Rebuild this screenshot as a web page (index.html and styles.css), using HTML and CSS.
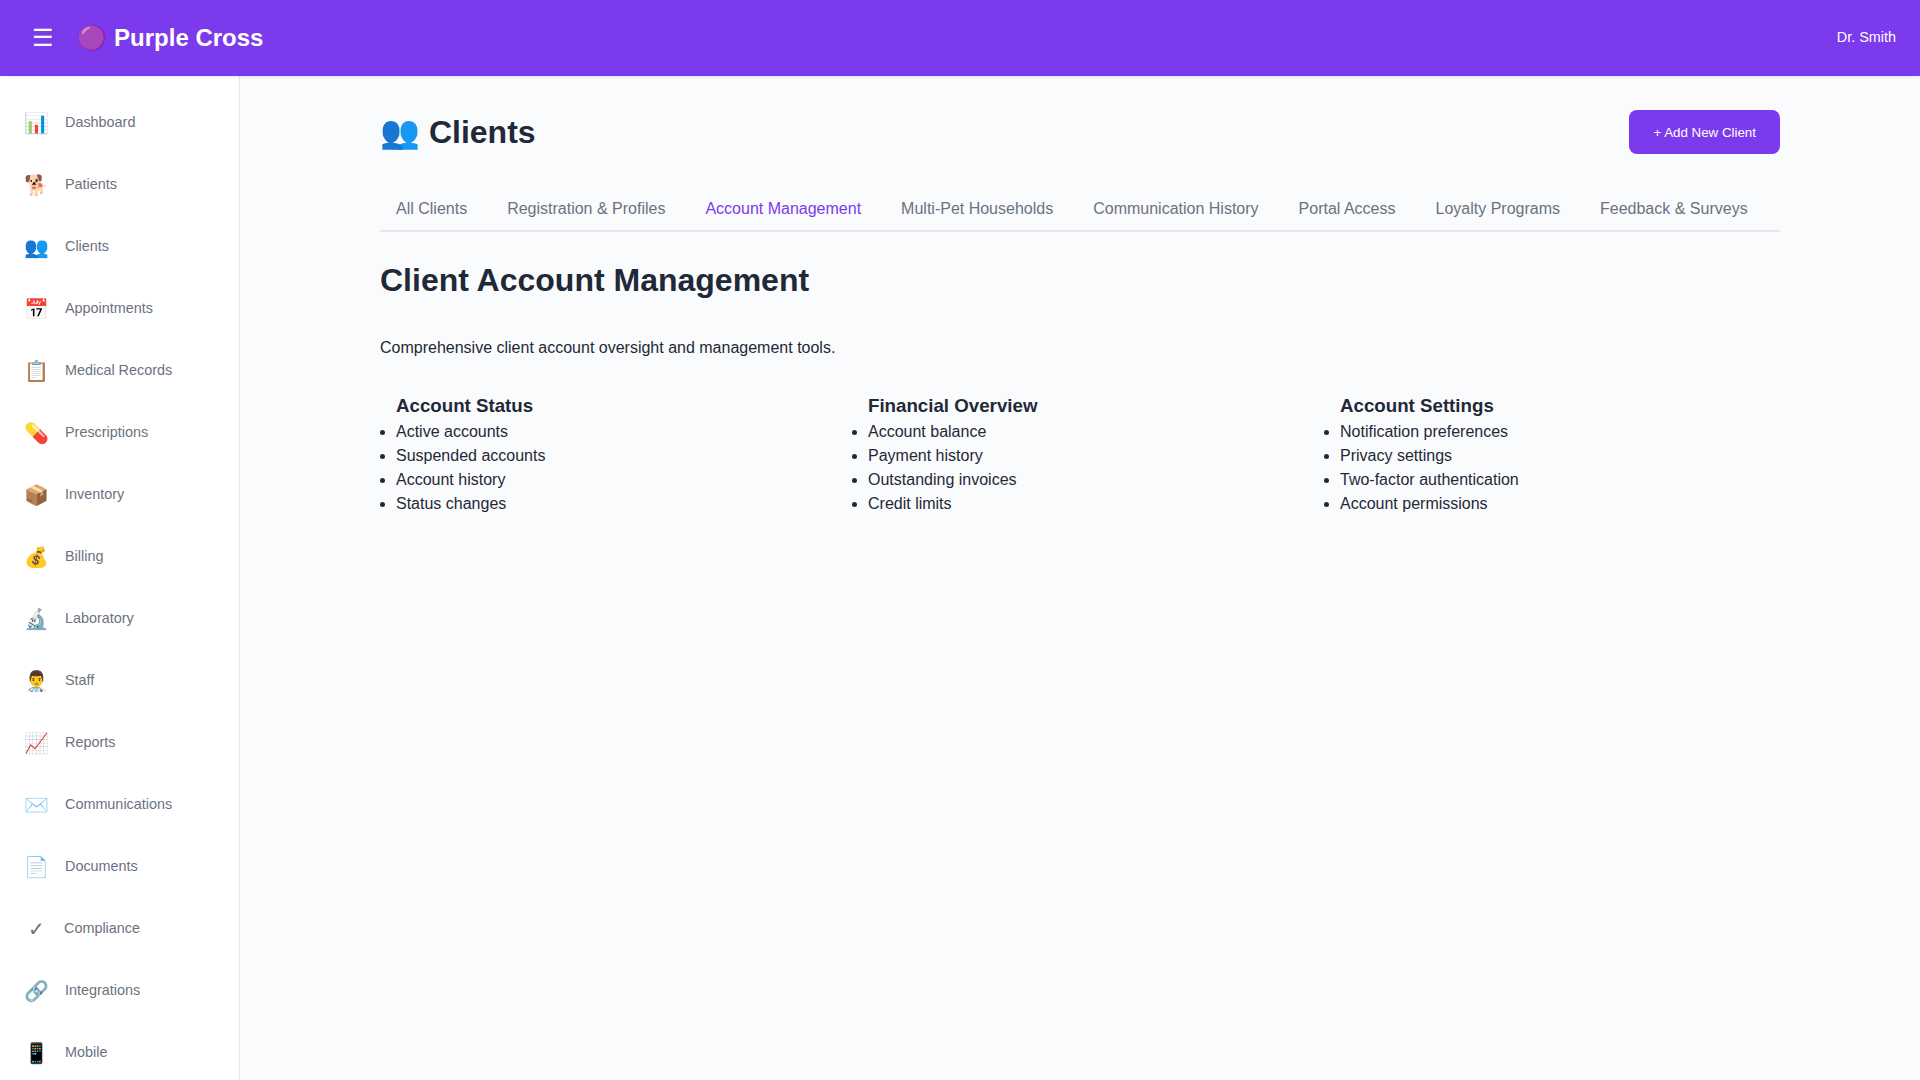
FILE: index.html
```html
<!DOCTYPE html>
<html lang="en">
<head>
	<meta charset="UTF-8">
	<title>Purple Cross</title>
	<link rel="stylesheet" href="styles.css">
</head>
<body>
<div class="app">
	<header class="topbar">
		<div class="topbar-left">
			<button class="menu-btn">☰</button>
			<div class="logo"><span>🟣</span> Purple Cross</div>
		</div>
		<div class="user">Dr. Smith</div>
	</header>
	<div class="layout">
		<!-- sidebar -->
		<nav class="sidebar">
			<a class="nav-item"><span class="nav-icon">📊</span><span>Dashboard</span></a>
			<a class="nav-item"><span class="nav-icon">🐕</span><span>Patients</span></a>
			<a class="nav-item"><span class="nav-icon">👥</span><span>Clients</span></a>
			<a class="nav-item"><span class="nav-icon">📅</span><span>Appointments</span></a>
			<a class="nav-item"><span class="nav-icon">📋</span><span>Medical Records</span></a>
			<a class="nav-item"><span class="nav-icon">💊</span><span>Prescriptions</span></a>
			<a class="nav-item"><span class="nav-icon">📦</span><span>Inventory</span></a>
			<a class="nav-item"><span class="nav-icon">💰</span><span>Billing</span></a>
			<a class="nav-item"><span class="nav-icon">🔬</span><span>Laboratory</span></a>
			<a class="nav-item"><span class="nav-icon">👨‍⚕️</span><span>Staff</span></a>
			<a class="nav-item"><span class="nav-icon">📈</span><span>Reports</span></a>
			<a class="nav-item"><span class="nav-icon">✉️</span><span>Communications</span></a>
			<a class="nav-item"><span class="nav-icon">📄</span><span>Documents</span></a>
			<a class="nav-item"><span class="nav-icon">✓</span><span>Compliance</span></a>
			<a class="nav-item"><span class="nav-icon">🔗</span><span>Integrations</span></a>
			<a class="nav-item"><span class="nav-icon">📱</span><span>Mobile</span></a>
		</nav>
		<!-- main content -->
		<main class="main">
			<div class="content">
				<div class="page-head">
					<h1 class="page-title"><span>👥</span> Clients</h1>
					<button class="add-btn">+ Add New Client</button>
				</div>
				<div class="tabs">
					<a class="tab">All Clients</a>
					<a class="tab">Registration &amp; Profiles</a>
					<a class="tab active">Account Management</a>
					<a class="tab">Multi-Pet Households</a>
					<a class="tab">Communication History</a>
					<a class="tab">Portal Access</a>
					<a class="tab">Loyalty Programs</a>
					<a class="tab">Feedback &amp; Surveys</a>
				</div>
				<h2 class="section-title">Client Account Management</h2>
				<p class="intro">Comprehensive client account oversight and management tools.</p>
				<div class="columns">
					<div class="col">
						<h3>Account Status</h3>
						<ul>
							<li>Active accounts</li>
							<li>Suspended accounts</li>
							<li>Account history</li>
							<li>Status changes</li>
						</ul>
					</div>
					<div class="col">
						<h3>Financial Overview</h3>
						<ul>
							<li>Account balance</li>
							<li>Payment history</li>
							<li>Outstanding invoices</li>
							<li>Credit limits</li>
						</ul>
					</div>
					<div class="col">
						<h3>Account Settings</h3>
						<ul>
							<li>Notification preferences</li>
							<li>Privacy settings</li>
							<li>Two-factor authentication</li>
							<li>Account permissions</li>
						</ul>
					</div>
				</div>
			</div>
		</main>
	</div>
</div>
</body>
</html>
```

FILE: styles.css
```css
* {
	box-sizing: border-box;
}
html, body {
	height: 100%;
}
body {
	margin: 0;
	overflow: hidden;
	font-family: "Liberation Sans", Arial, sans-serif;
	line-height: 1.6;
	color: #1f2937;
	background: #fafbfc;
}
.app {
	display: flex;
	flex-direction: column;
	height: 100vh;
}
.topbar {
	position: relative;
	z-index: 2;
	display: flex;
	flex: none;
	align-items: center;
	justify-content: space-between;
	height: 76px;
	padding: 0 24px;
	color: #fff;
	background: #7c3aed;
	box-shadow: 0 1px 3px rgba(0,0,0,.1);
}
.topbar-left {
	display: flex;
	align-items: center;
	gap: 15.4px;
}
.menu-btn {
	padding: 8px;
	border: none;
	background: none;
	color: #fff;
	font-size: 24px;
	line-height: 1;
	font-family: inherit;
}
.logo {
	font-size: 24px;
	font-weight: 700;
}
.user {
	font-size: 14.4px;
}
.layout {
	display: flex;
	flex: 1;
	min-height: 0;
}
.sidebar {
	flex: none;
	width: 240px;
	padding-top: 16px;
	overflow: hidden;
	background: #fff;
	border-right: 1px solid #e5e7eb;
}
.nav-item {
	display: flex;
	align-items: center;
	gap: 16px;
	height: 62px;
	padding: 0 24px;
	font-size: 14.4px;
	color: #6b7280;
}
.nav-icon {
	min-width: 24px;
	font-size: 20px;
	text-align: center;
}
.main {
	flex: 1;
	padding: 32px;
}
.content {
	max-width: 1400px;
	margin: 0 auto;
}
.page-head {
	display: flex;
	align-items: center;
	justify-content: space-between;
	margin-bottom: 32px;
}
.page-title {
	margin: 0;
	font-size: 32px;
	font-weight: 700;
	line-height: 48px;
}
.add-btn {
	height: 44px;
	padding: 0 24px;
	border: none;
	border-radius: 8px;
	color: #fff;
	background: #7c3aed;
	font-family: inherit;
	font-size: 13.33px;
}
.tabs {
	display: flex;
	gap: 8px;
	border-bottom: 2px solid #e5e7eb;
}
.tab {
	padding: 8px 16px;
	font-size: 16px;
	color: #6b7280;
}
.tab.active {
	color: #7c3aed;
}
.section-title {
	margin: 23px 0 0;
	font-size: 32px;
	font-weight: 700;
}
.intro {
	margin: 29px 0 0;
	font-size: 16px;
}
.columns {
	display: grid;
	grid-template-columns: repeat(3, 1fr);
	gap: 16px;
	margin-top: 31px;
}
.col {
	padding-left: 16px;
}
.col h3 {
	margin: 0;
	font-size: 18.72px;
	font-weight: 700;
	line-height: 29px;
}
.col ul {
	margin: 0;
	padding: 0;
}
.col li {
	font-size: 16px;
	line-height: 24px;
}
```
